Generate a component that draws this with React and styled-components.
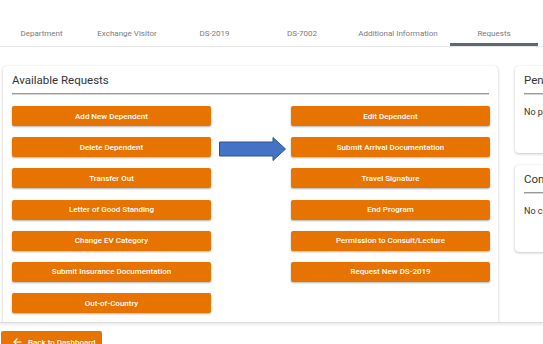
import React from "react";
import styled, { createGlobalStyle } from "styled-components";

const GlobalStyle = createGlobalStyle`
  body {
    margin: 0;
    background: #ffffff;
    font-family: Roboto, "Liberation Sans", sans-serif;
    overflow: hidden;
  }
`;

const Page = styled.div`
  width: 543px;
  height: 344px;
  display: flex;
  flex-direction: column;
  overflow: hidden;
`;

// tab bar at the top
const TabBar = styled.div`
  display: flex;
  padding-top: 20px;
  border-bottom: 1px solid #e6e6e6;
  flex-shrink: 0;
`;

const Tab = styled.div`
  width: ${(p) => p.$w}px;
  height: 26px;
  flex-shrink: 0;
  display: flex;
  align-items: center;
  justify-content: center;
  font-size: 8px;
  color: #7a7a7a;
  box-sizing: border-box;
  border-bottom: 3px solid ${(p) => (p.$active ? "#5e6875" : "transparent")};
  padding-top: 3px;
`;

const Content = styled.div`
  height: 276px;
  display: flex;
  align-items: flex-start;
  padding-top: 19px;
  box-sizing: border-box;
  border-bottom: 1px solid #dcdcdc;
  box-shadow: 0 2px 2px rgba(0, 0, 0, 0.08);
  overflow: hidden;
  flex-shrink: 0;
`;

const Card = styled.div`
  background: #fff;
  border-radius: 4px;
  box-shadow: 0 1px 3px rgba(0, 0, 0, 0.22), 0 0 1px rgba(0, 0, 0, 0.12);
  padding: 7px 9px 9px;
  box-sizing: border-box;
  flex-shrink: 0;
`;

const MainCard = styled(Card)`
  margin-left: 3px;
  width: 495px;
  height: 290px;
`;

const CardTitle = styled.div`
  font-size: 11.5px;
  line-height: 15px;
  color: #333;
  padding-bottom: 5px;
  border-bottom: 1px solid #9a9a9a;
  box-shadow: 0 1px 0 #d6d6d6;
  white-space: nowrap;
`;

const Grid = styled.div`
  display: grid;
  grid-template-columns: 199px 80px 199px;
  grid-auto-rows: 20px;
  row-gap: 11.2px;
  margin-top: 12px;
`;

const RequestButton = styled.button`
  grid-column: ${(p) => p.$col};
  grid-row: ${(p) => p.$row};
  height: 20px;
  border: none;
  border-radius: 2px;
  background: #e77400;
  color: #fff;
  font-family: Roboto, "Liberation Sans", sans-serif;
  font-size: 8px;
  font-weight: 500;
  box-shadow: 0 1px 2px rgba(0, 0, 0, 0.3);
  cursor: pointer;
  padding: 0;
`;

const ArrowSlot = styled.div`
  grid-column: 2;
  grid-row: 2;
  align-self: start;
  margin-left: 8px;
  height: 24px;
`;

const SideColumn = styled.div`
  display: flex;
  flex-direction: column;
  gap: 12px;
  margin-left: 17px;
`;

const SideCard = styled(Card)`
  width: 200px;
  height: 87px;
`;

const SideText = styled.div`
  font-size: 9px;
  color: #333;
  margin-top: 13px;
  white-space: nowrap;
`;

const Footer = styled.div`
  padding: 8px 0 0 1px;
`;

const BackButton = styled.button`
  width: 101px;
  height: 22px;
  display: flex;
  align-items: center;
  gap: 6px;
  padding: 0 0 0 12px;
  border: none;
  border-radius: 2px;
  background: #e77400;
  color: #fff;
  font-family: Roboto, "Liberation Sans", sans-serif;
  font-size: 8px;
  font-weight: 500;
`;

const tabs = [
  { label: "Department", w: 83 },
  { label: "Exchange Visitor", w: 88 },
  { label: "DS-2019", w: 87 },
  { label: "DS-7002", w: 88 },
  { label: "Additional Information", w: 104 },
  { label: "Requests", w: 88, active: true },
];

const leftRequests = [
  "Add New Dependent",
  "Delete Dependent",
  "Transfer Out",
  "Letter of Good Standing",
  "Change EV Category",
  "Submit Insurance Documentation",
  "Out-of-Country",
];

const rightRequests = [
  "Edit Dependent",
  "Submit Arrival Documentation",
  "Travel Signature",
  "End Program",
  "Permission to Consult/Lecture",
  "Request New DS-2019",
];

const BlueArrow = () => (
  <svg width="67" height="24" viewBox="0 0 67 24">
    <polygon
      points="0.5,5 54,5 54,0.5 66.5,12 54,23.5 54,19 0.5,19"
      fill="#4472c4"
      stroke="#2f528f"
      strokeWidth="1"
    />
  </svg>
);

const App = () => {
  return (
    <Page>
      <GlobalStyle />
      <TabBar>
        {tabs.map((t) => (
          <Tab key={t.label} $w={t.w} $active={t.active}>
            {t.label}
          </Tab>
        ))}
      </TabBar>
      <Content>
        <MainCard>
          <CardTitle>Available Requests</CardTitle>
          <Grid>
            {leftRequests.map((r, i) => (
              <RequestButton key={r} $col={1} $row={i + 1}>
                {r}
              </RequestButton>
            ))}
            <ArrowSlot>
              <BlueArrow />
            </ArrowSlot>
            {rightRequests.map((r, i) => (
              <RequestButton key={r} $col={3} $row={i + 1}>
                {r}
              </RequestButton>
            ))}
          </Grid>
        </MainCard>
        <SideColumn>
          <SideCard>
            <CardTitle>Pending Requests</CardTitle>
            <SideText>No pending requests</SideText>
          </SideCard>
          <SideCard>
            <CardTitle>Completed Requests</CardTitle>
            <SideText>No completed requests</SideText>
          </SideCard>
        </SideColumn>
      </Content>
      <Footer>
        <BackButton>
          <svg width="9" height="8" viewBox="0 0 9 8">
            <path d="M8.5 4H1M4.5 0.5L1 4l3.5 3.5" fill="none" stroke="#fff" strokeWidth="1.2" />
          </svg>
          Back to Dashboard
        </BackButton>
      </Footer>
    </Page>
  );
};

export default App;
